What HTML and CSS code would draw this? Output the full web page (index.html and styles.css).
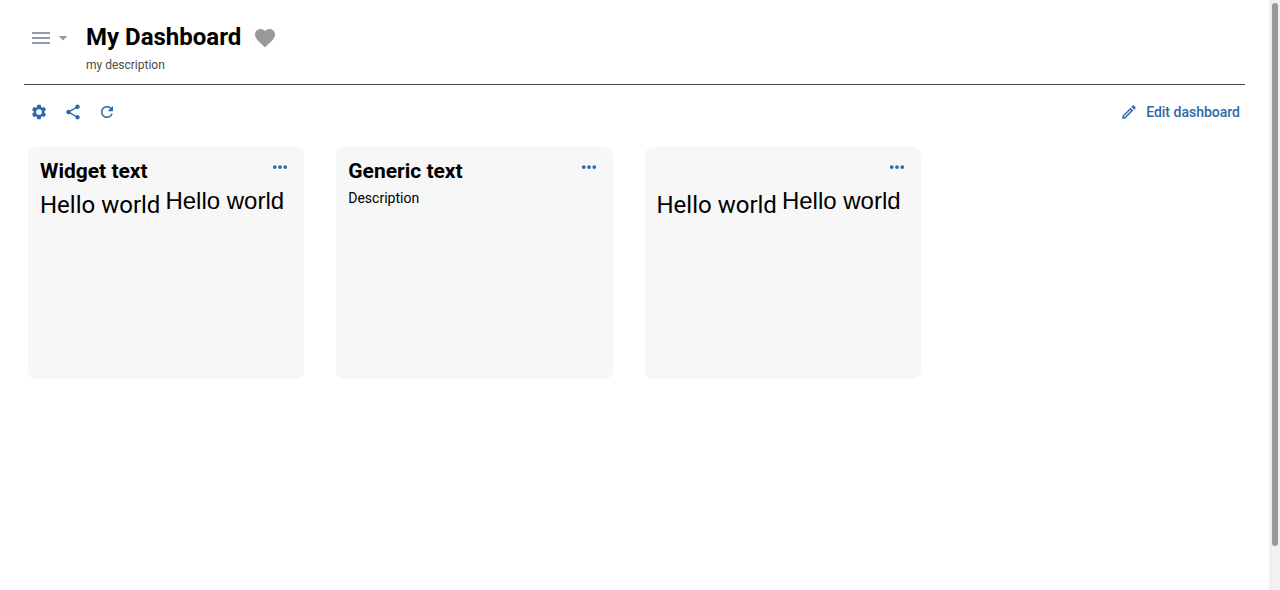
FILE: index.html
```html
<!DOCTYPE html>
<html lang="en">
<head>
<meta charset="utf-8">
<title>My Dashboard</title>
<link rel="stylesheet" href="styles.css">
</head>
<body>
<div class="shell">
  <main class="page">
    <header class="header">
      <button class="icon-button quick-access" type="button" aria-label="Open dashboard list">
        <svg class="menu-icon" viewBox="0 0 24 24" aria-hidden="true"><path d="M3 18h18v-2H3v2zm0-5h18v-2H3v2zm0-7v2h18V6H3z"/></svg>
        <svg class="caret-icon" viewBox="0 0 20 20" aria-hidden="true"><path d="M5.700 8l4.300 4.400 4.300-4.400z"/></svg>
      </button>
      <div class="heading">
        <div class="title-row">
          <h1 class="title">My Dashboard</h1>
          <button class="icon-button favorite" type="button" aria-label="Favorite">
            <svg viewBox="0 0 24 24" aria-hidden="true"><path d="M12 21.350l-1.450-1.320C5.400 15.360 2 12.280 2 8.500 2 5.420 4.420 3 7.500 3c1.740 0 3.410.81 4.500 2.090C13.090 3.810 14.760 3 16.500 3 19.580 3 22 5.420 22 8.500c0 3.780-3.400 6.860-8.550 11.540L12 21.350z"/></svg>
          </button>
        </div>
        <p class="description">my description</p>
      </div>
    </header>

    <div class="toolbar">
      <div class="actions">
        <button class="icon-button action" type="button" aria-label="Settings">
          <svg viewBox="0 0 24 24" aria-hidden="true"><path fill-rule="evenodd" d="M19.140 12.940c.04-.3.06-.61.06-.94 0-.32-.02-.64-.07-.94l2.030-1.580c.18-.14.23-.41.12-.61l-1.920-3.320c-.12-.22-.37-.29-.59-.22l-2.390.96c-.5-.38-1.030-.7-1.620-.94l-.36-2.540c-.04-.24-.24-.41-.48-.41h-3.840c-.24 0-.43.17-.47.41l-.36 2.540c-.59.24-1.130.57-1.620.94l-2.390-.96c-.22-.08-.47 0-.59.22L2.740 8.870c-.12.21-.08.47.12.61l2.030 1.580c-.05.3-.09.63-.09.94s.02.64.07.94l-2.030 1.580c-.18.14-.23.41-.12.61l1.920 3.320c.12.22.37.29.59.22l2.390-.96c.5.38 1.030.7 1.620.94l.36 2.540c.05.24.24.41.48.41h3.840c.24 0 .44-.17.47-.41l.36-2.540c.59-.24 1.130-.56 1.620-.94l2.390.96c.22.08.47 0 .59-.22l1.920-3.320c.12-.22.07-.47-.12-.61l-2.010-1.580zM12 15.800a3.800 3.800 0 1 1 0-7.600 3.800 3.800 0 0 1 0 7.600z"/></svg>
        </button>
        <button class="icon-button action" type="button" aria-label="Share">
          <svg viewBox="0 0 24 24" aria-hidden="true"><path d="M18 16.080c-.76 0-1.440.3-1.960.77L8.910 12.700c.05-.23.09-.46.09-.7s-.04-.47-.09-.7l7.050-4.110c.54.5 1.250.81 2.040.81 1.660 0 3-1.340 3-3s-1.340-3-3-3-3 1.340-3 3c0 .24.04.47.09.7L8.040 9.810C7.500 9.310 6.790 9 6 9c-1.660 0-3 1.340-3 3s1.340 3 3 3c.79 0 1.500-.31 2.040-.81l7.120 4.160c-.05.21-.08.43-.08.65 0 1.610 1.310 2.920 2.920 2.920s2.920-1.310 2.920-2.920-1.310-2.920-2.920-2.920z"/></svg>
        </button>
        <button class="icon-button action" type="button" aria-label="Refresh">
          <svg viewBox="0 0 24 24" aria-hidden="true"><path d="M17.650 6.350C16.200 4.900 14.210 4 12 4c-4.420 0-7.990 3.580-7.990 8s3.570 8 7.990 8c3.730 0 6.840-2.550 7.730-6h-2.080c-.82 2.330-3.040 4-5.650 4-3.310 0-6-2.690-6-6s2.690-6 6-6c1.660 0 3.140.69 4.220 1.780L13 11h7V4l-2.350 2.350z"/></svg>
        </button>
      </div>
      <button class="edit" type="button">
        <svg class="edit-icon" viewBox="0 0 24 24" aria-hidden="true"><path d="M14.060 9.020l.92.92L5.920 19H5v-.92l9.060-9.060M17.660 3c-.25 0-.51.1-.7.29l-1.830 1.830 3.750 3.750 1.830-1.830c.39-.39.39-1.020 0-1.410l-2.340-2.340c-.2-.2-.45-.29-.71-.29zm-3.600 3.190L3 17.250V21h3.750L17.810 9.940l-3.750-3.750z"/></svg>
        Edit dashboard
      </button>
    </div>

    <section class="widgets" aria-label="Widgets">
      <article class="card">
        <div class="card-header">
          <h2 class="card-title">Widget text</h2>
          <button class="icon-button more" type="button" aria-label="More actions"><svg viewBox="0 0 24 24" aria-hidden="true"><circle cx="5" cy="12" r="2.500"/><circle cx="12" cy="12" r="2.500"/><circle cx="19" cy="12" r="2.500"/></svg></button>
        </div>
        <div class="card-body">
          <p class="message">Hello world</p>
          <p class="message raised">Hello world</p>
        </div>
      </article>
      <article class="card">
        <div class="card-header">
          <h2 class="card-title">Generic text</h2>
          <button class="icon-button more" type="button" aria-label="More actions"><svg viewBox="0 0 24 24" aria-hidden="true"><circle cx="5" cy="12" r="2.500"/><circle cx="12" cy="12" r="2.500"/><circle cx="19" cy="12" r="2.500"/></svg></button>
        </div>
        <p class="card-text">Description</p>
      </article>
      <article class="card">
        <div class="card-header">
          <button class="icon-button more" type="button" aria-label="More actions"><svg viewBox="0 0 24 24" aria-hidden="true"><circle cx="5" cy="12" r="2.500"/><circle cx="12" cy="12" r="2.500"/><circle cx="19" cy="12" r="2.500"/></svg></button>
        </div>
        <div class="card-body">
          <p class="message">Hello world</p>
          <p class="message raised">Hello world</p>
        </div>
      </article>
    </section>
  </main>
  <div class="scroll-track"><div class="scroll-thumb"></div></div>
</div>
</body>
</html>
```
FILE: styles.css
```css
* {
  box-sizing: border-box;
}

body {
  margin: 0;
  background: #fff;
  color: #000;
  font-family: Roboto, "Liberation Sans", sans-serif;
}

h1, h2, p {
  margin: 0;
}

button {
  border: 0;
  padding: 0;
  background: none;
  font: inherit;
  cursor: pointer;
}

svg {
  display: block;
  fill: currentColor;
}

.shell {
  display: flex;
  min-height: 100vh;
}

.page {
  flex: 1;
  padding: 20px 24px;
}

.icon-button {
  display: flex;
  align-items: center;
  justify-content: center;
}

.header {
  display: flex;
  align-items: flex-start;
  gap: 13px;
  padding: 0 0 8px 5px;
  border-bottom: 1px solid #4a4a4a;
}

.quick-access {
  height: 36px;
  color: #8f9bac;
}

.menu-icon {
  width: 24px;
  height: 24px;
}

.caret-icon {
  width: 20px;
  height: 20px;
}

.title-row {
  display: flex;
  align-items: center;
  gap: 12px;
  height: 34px;
}

.title {
  font-size: 24px;
  line-height: 32px;
  font-weight: 700;
}

.favorite {
  padding-top: 2px;
  color: #999;
}

.favorite svg {
  width: 24px;
  height: 24px;
}

.description {
  color: #4a4a4a;
  font-size: 12px;
  line-height: 22px;
}

.toolbar {
  display: flex;
  align-items: center;
  justify-content: space-between;
  padding: 10px 5px 18px 6px;
  color: #2e68aa;
}

.actions {
  display: flex;
  gap: 16px;
}

.action {
  color: inherit;
}

.action svg {
  width: 18px;
  height: 18px;
}

.edit {
  display: flex;
  align-items: center;
  gap: 8px;
  height: 34px;
  color: inherit;
  font-size: 14px;
  font-weight: 500;
}

.edit-icon {
  width: 18px;
  height: 18px;
}

.widgets {
  display: grid;
  grid-template-columns: repeat(4, 1fr);
  gap: 32px;
  padding: 0 16px 0 4px;
}

.card {
  min-height: 232px;
  padding: 8px 12px;
  border-radius: 8px;
  background: #f7f7f7;
}

.card-header {
  display: flex;
  align-items: flex-start;
  height: 32px;
}

.card-title {
  font-size: 21px;
  line-height: 32px;
  font-weight: 700;
}

.more {
  width: 24px;
  height: 24px;
  margin-left: auto;
  color: #2e68aa;
}

.more svg {
  width: 18px;
  height: 18px;
}

.card-body {
  display: flex;
  gap: 5px;
}

.message {
  padding-top: 4px;
  font-size: 24px;
  line-height: 28px;
  white-space: nowrap;
}

.raised {
  padding-top: 0;
  font-family: "Liberation Sans", sans-serif;
}

.card-text {
  font-size: 14px;
  line-height: 22px;
}

.scroll-track {
  width: 11px;
  padding: 3px 2px 3px 3px;
  background: #f1f1f1;
}

.scroll-thumb {
  height: 92vh;
  border-radius: 3px;
  background: #999;
}
```
